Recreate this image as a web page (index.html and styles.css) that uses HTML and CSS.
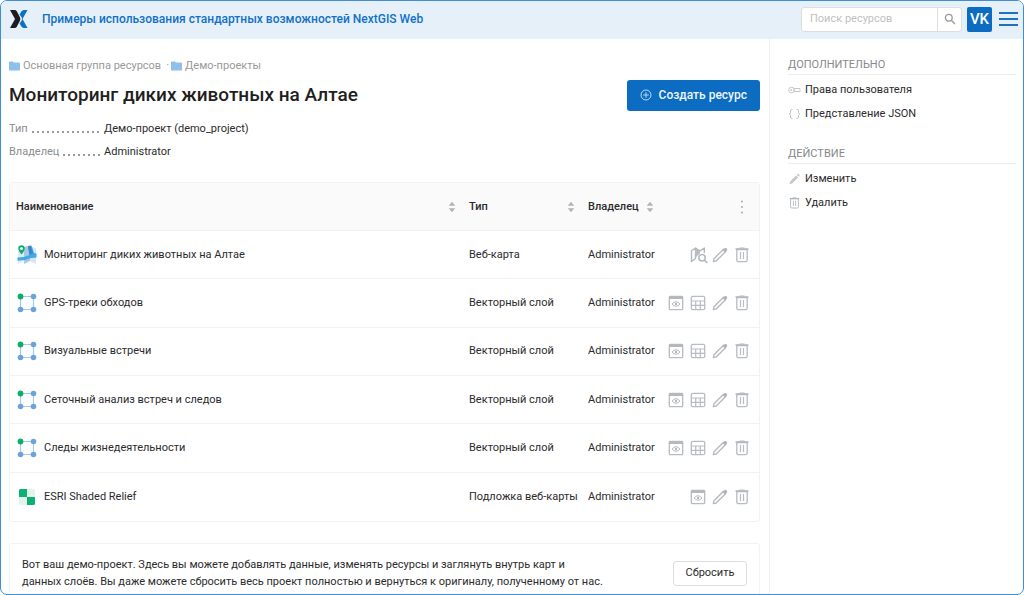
FILE: index.html
```html
<!DOCTYPE html>
<html lang="ru">
<head>
<meta charset="utf-8">
<title>Мониторинг диких животных на Алтае</title>
<link rel="stylesheet" href="styles.css">
</head>
<body>
<svg class="sprite" aria-hidden="true">
  <symbol id="folder" viewBox="0 0 12 10"><path d="M0 1q0-1 1-1h3.300l1 1.300H11q1 0 1 1V9q0 1-1 1H1q-1 0-1-1z" fill="#8dc1eb"/></symbol>
  <symbol id="sort" viewBox="0 0 8 12"><path d="M4 .8 7.300 4.800H.7zM4 11.200.7 7.200h6.600z" fill="#b2b4b6"/></symbol>
  <symbol id="vector" viewBox="0 0 20 20"><path d="M3.500 3.500h13v13h-13z" fill="none" stroke="#a5c9ea" stroke-width="1.200"/><circle cx="3.500" cy="3.500" r="2.900" fill="#0caf69"/><circle cx="16.500" cy="3.500" r="2.800" fill="#6ca3da"/><circle cx="3.500" cy="16.500" r="2.800" fill="#6ca3da"/><circle cx="16.500" cy="16.500" r="2.800" fill="#6ca3da"/></symbol>
  <symbol id="webmap" viewBox="0 0 20 20"><path d="M1 5 7 2v14l-6 3z" fill="#d9eaf8"/><path d="M7 2l6-1.500V16l-6 3z" fill="#a9c8e5"/><path d="M13 1l6 2.500V19l-6-3z" fill="#d5e6f5"/><path d="M.5 12.500 7 12l5.500-2L11 1.500 14.500.5 17 8l2.500.5v4L14 13l-6 2-7.500.8z" fill="#43a7e8"/><path d="M12.500 10 11 1.500 13.500.5 16 8z" fill="#3c86ca"/><path d="M4.500 9.500C2.500 6.800 1.300 5.300 1.300 3.500a3.200 3.200 0 0 1 6.400 0c0 1.800-1.200 3.300-3.200 6z" fill="#0cae6a"/><circle cx="4.500" cy="3.500" r="1.500" fill="#e9fff4"/></symbol>
  <symbol id="basemap" viewBox="0 0 20 20"><rect x="2" y="2" width="16" height="16" rx="1.500" fill="#e3f4ed"/><path d="M3.500 2H10v8H2V3.500Q2 2 3.500 2zM10 10h8v6.500q0 1.500-1.500 1.500H10z" fill="#0bb173"/></symbol>
  <symbol id="preview" viewBox="0 0 16 16"><rect x="1.300" y="1.300" width="13.400" height="13.400" rx="1" fill="none" stroke="#b7bcc2" stroke-width="1.300"/><path d="M1 1h14v3H1z" fill="#b3b9bf"/><path d="M4 9q4-4.600 8 0-4 4.600-8 0z" fill="none" stroke="#b7bcc2"/><circle cx="8" cy="9" r="1.200" fill="#b3b9bf"/></symbol>
  <symbol id="grid" viewBox="0 0 16 16"><rect x="1.300" y="1.300" width="13.400" height="13.400" rx="1.500" fill="none" stroke="#b7bcc2" stroke-width="1.300"/><path d="M1 6h14M1 10.300h14M5.700 6v9M10.300 6v9" stroke="#b7bcc2" stroke-width="1.200"/></symbol>
  <symbol id="pencil" viewBox="0 0 16 16"><path d="m1.300 14.700.6-3 9.600-9.500 2.300 2.300-9.600 9.500z" fill="none" stroke="#b5bac0" stroke-width="1.300" stroke-linejoin="round"/><path d="m10.500 3 2.300-2q.7-.5 1.300 0l.9.900q.5.600 0 1.300l-2 2.300z" fill="#aeb4ba"/></symbol>
  <symbol id="trash" viewBox="0 0 16 16"><path d="M2.800 2.500h10.400V13q0 1.700-1.700 1.700h-7q-1.700 0-1.700-1.700z" fill="none" stroke="#b7bcc2" stroke-width="1.300"/><path d="M1.500 2h13" stroke="#b0b6bc" stroke-width="1.500"/><path d="M5.500 1h5M6.500 5v7M9.500 5v7" stroke="#b7bcc2" stroke-width="1.200"/></symbol>
  <symbol id="mapview" viewBox="0 0 18 18"><path d="M5.500 2v10.500l-4 3V4.800zL10 4.800 14.300 2v5" fill="none" stroke="#b3b9bf" stroke-width="1.400" stroke-linejoin="round"/><path d="M5.500 2 10 4.800v2.500L7 10l-1.500 2.500z" fill="#b8bdc3"/><circle cx="12" cy="11.800" r="3.200" fill="#fff" stroke="#b3b9bf" stroke-width="1.500"/><path d="m14.300 14 3 3" stroke="#b3b9bf" stroke-width="1.700"/></symbol>
</svg>

<div class="frame">
  <header class="topbar">
    <a class="logo" href="#" aria-label="NextGIS"><svg width="18" height="18" viewBox="0 0 18 18"><path d="M0 0h4.500q1.500 0 2.300 1.300L9.800 7q1.200 2 0 4l-3 5.700Q6 18 4.500 18H0l5-9z" fill="#1d1d1f"/><path d="M17.500 0H14q-1.800 0-2.800 1.800L9.600 4.600l2.100 3q.8 1.400 0 2.800l-2.100 3 1.600 2.800q1 1.800 2.800 1.800h3.500l-5-9z" fill="#0b70c9"/></svg></a>
    <a class="portal" href="#">Примеры использования стандартных возможностей NextGIS Web</a>
    <form class="search">
      <input type="search" placeholder="Поиск ресурсов" aria-label="Поиск ресурсов">
      <button type="button" aria-label="Найти"><svg width="12" height="12" viewBox="0 0 12 12" fill="none" stroke="#999" stroke-width="1.300"><circle cx="4.800" cy="4.800" r="3.400"/><path d="m7.300 7.300 3.700 3.700"/></svg></button>
    </form>
    <button class="avatar" type="button">VK</button>
    <button class="menu" type="button" aria-label="Меню"><span></span><span></span><span></span></button>
  </header>

  <div class="body">
    <main class="main">
      <nav class="crumbs">
        <a href="#"><svg width="11" height="10"><use href="#folder"/></svg>Основная группа ресурсов</a>
        <span class="dot">·</span>
        <a href="#"><svg width="11" height="10"><use href="#folder"/></svg>Демо-проекты</a>
      </nav>
      <div class="heading">
        <h1>Мониторинг диких животных на Алтае</h1>
        <button class="create" type="button"><svg width="12" height="12" viewBox="0 0 12 12" fill="none" stroke="#b9daf5"><circle cx="6" cy="6" r="5"/><path d="M6 3.200v5.600M3.200 6h5.600"/></svg>Создать ресурс</button>
      </div>
      <dl class="facts">
        <div><dt>Тип</dt><dd>Демо-проект (demo_project)</dd></div>
        <div><dt>Владелец</dt><dd>Administrator</dd></div>
      </dl>

      <table class="resources">
        <colgroup><col><col class="c-type"><col class="c-owner"><col class="c-actions"></colgroup>
        <thead>
          <tr>
            <th><div class="cell">Наименование<svg class="push" width="8" height="12"><use href="#sort"/></svg></div></th>
            <th><div class="cell">Тип<svg class="push" width="8" height="12"><use href="#sort"/></svg></div></th>
            <th><div class="cell">Владелец<svg class="push" width="8" height="12"><use href="#sort"/></svg></div></th>
            <th><div class="actions"><button type="button" aria-label="Ещё"><svg width="16" height="16" viewBox="0 0 16 16" fill="#aaa"><circle cx="8" cy="2.500" r="1"/><circle cx="8" cy="8" r="1"/><circle cx="8" cy="13.500" r="1"/></svg></button></div></th>
          </tr>
        </thead>
        <tbody>
          <tr><td><a class="cell" href="#"><svg width="20" height="20"><use href="#webmap"/></svg>Мониторинг диких животных на Алтае</a></td><td>Веб-карта</td><td>Administrator</td><td><div class="actions"><button type="button" aria-label="Открыть карту"><svg width="18" height="18"><use href="#mapview"/></svg></button><button type="button" aria-label="Изменить"><svg width="16" height="16"><use href="#pencil"/></svg></button><button type="button" aria-label="Удалить"><svg width="16" height="16"><use href="#trash"/></svg></button></div></td></tr>
          <tr><td><a class="cell" href="#"><svg width="20" height="20"><use href="#vector"/></svg>GPS-треки обходов</a></td><td>Векторный слой</td><td>Administrator</td><td><div class="actions"><button type="button" aria-label="Просмотр"><svg width="16" height="16"><use href="#preview"/></svg></button><button type="button" aria-label="Таблица"><svg width="16" height="16"><use href="#grid"/></svg></button><button type="button" aria-label="Изменить"><svg width="16" height="16"><use href="#pencil"/></svg></button><button type="button" aria-label="Удалить"><svg width="16" height="16"><use href="#trash"/></svg></button></div></td></tr>
          <tr><td><a class="cell" href="#"><svg width="20" height="20"><use href="#vector"/></svg>Визуальные встречи</a></td><td>Векторный слой</td><td>Administrator</td><td><div class="actions"><button type="button" aria-label="Просмотр"><svg width="16" height="16"><use href="#preview"/></svg></button><button type="button" aria-label="Таблица"><svg width="16" height="16"><use href="#grid"/></svg></button><button type="button" aria-label="Изменить"><svg width="16" height="16"><use href="#pencil"/></svg></button><button type="button" aria-label="Удалить"><svg width="16" height="16"><use href="#trash"/></svg></button></div></td></tr>
          <tr><td><a class="cell" href="#"><svg width="20" height="20"><use href="#vector"/></svg>Сеточный анализ встреч и следов</a></td><td>Векторный слой</td><td>Administrator</td><td><div class="actions"><button type="button" aria-label="Просмотр"><svg width="16" height="16"><use href="#preview"/></svg></button><button type="button" aria-label="Таблица"><svg width="16" height="16"><use href="#grid"/></svg></button><button type="button" aria-label="Изменить"><svg width="16" height="16"><use href="#pencil"/></svg></button><button type="button" aria-label="Удалить"><svg width="16" height="16"><use href="#trash"/></svg></button></div></td></tr>
          <tr><td><a class="cell" href="#"><svg width="20" height="20"><use href="#vector"/></svg>Следы жизнедеятельности</a></td><td>Векторный слой</td><td>Administrator</td><td><div class="actions"><button type="button" aria-label="Просмотр"><svg width="16" height="16"><use href="#preview"/></svg></button><button type="button" aria-label="Таблица"><svg width="16" height="16"><use href="#grid"/></svg></button><button type="button" aria-label="Изменить"><svg width="16" height="16"><use href="#pencil"/></svg></button><button type="button" aria-label="Удалить"><svg width="16" height="16"><use href="#trash"/></svg></button></div></td></tr>
          <tr><td><a class="cell" href="#"><svg width="20" height="20"><use href="#basemap"/></svg>ESRI Shaded Relief</a></td><td>Подложка веб-карты</td><td>Administrator</td><td><div class="actions"><button type="button" aria-label="Просмотр"><svg width="16" height="16"><use href="#preview"/></svg></button><button type="button" aria-label="Изменить"><svg width="16" height="16"><use href="#pencil"/></svg></button><button type="button" aria-label="Удалить"><svg width="16" height="16"><use href="#trash"/></svg></button></div></td></tr>
        </tbody>
      </table>

      <section class="note">
        <p>Вот ваш демо-проект. Здесь вы можете добавлять данные, изменять ресурсы и заглянуть внутрь карт и<br>данных слоёв. Вы даже можете сбросить весь проект полностью и вернуться к оригиналу, полученному от нас.</p>
        <button type="button">Сбросить</button>
      </section>
    </main>

    <aside class="side">
      <h2>Дополнительно</h2>
      <ul>
        <li><a href="#"><svg width="13" height="12" viewBox="0 0 13 12" fill="none" stroke="#c3c7cb"><circle cx="3.500" cy="6" r="2.800"/><circle cx="3.200" cy="6" r=".6"/><path d="M6 4.500h6v3H6z"/></svg>Права пользователя</a></li>
        <li><a href="#"><svg width="13" height="12" viewBox="0 0 13 12" fill="none" stroke="#b9bec3"><path d="M4.500 1.500H3.800Q2.500 1.500 2.500 3v1.500L1.500 6l1 1.500V9q0 1.500 1.300 1.500h.7M8.500 1.500h.7q1.300 0 1.300 1.500v1.500l1 1.500-1 1.500V9q0 1.500-1.300 1.500h-.7"/></svg>Представление JSON</a></li>
      </ul>
      <h2>Действие</h2>
      <ul>
        <li><a href="#"><svg width="13" height="12" viewBox="0 0 13 12"><path d="m1.500 11 .6-2.600 6-6 2 2-6 6zM8.700 1.800l.8-.8q.6-.4 1 0l1 1q.4.500 0 1l-.8.800z" fill="#c3c7cb"/></svg>Изменить</a></li>
        <li><a href="#"><svg width="13" height="12"><use href="#trash"/></svg>Удалить</a></li>
      </ul>
    </aside>
  </div>
</div>
</body>
</html>
```

FILE: styles.css
```css
* { box-sizing: border-box; }
body { margin: 0; background: #fff; color: #2b2b2d; font: 11px/20px Roboto, "Noto Sans", sans-serif; }
a { color: inherit; text-decoration: none; }
button { font: inherit; color: inherit; padding: 0; border: 0; background: none; cursor: pointer; }
svg { flex: none; display: block; }
h1, h2, p, ul, dl, dd { margin: 0; padding: 0; }
.sprite { position: absolute; width: 0; height: 0; }

.frame { display: flex; flex-direction: column; height: 100vh; overflow: hidden; border: 1px solid #3f8ed3; border-radius: 7px; }

.topbar { display: flex; align-items: center; flex: none; height: 38px; padding: 0 5px 2px 9px; background: #e6f0f9; }
.logo { margin-right: 14px; }
.portal { margin-right: auto; color: #1271c6; font-size: 12px; font-weight: 500; }
.search { display: flex; width: 161px; height: 25px; margin-right: 5px; background: #fff; border: 1px solid #dcdfe2; border-radius: 3px; }
.search input { flex: 1; min-width: 0; padding: 0 8px; border: 0; background: none; font: inherit; outline: 0; }
.search input::placeholder { color: #bfbfbf; }
.search button { display: grid; place-items: center; width: 24px; border-left: 1px solid #dcdfe2; }
.avatar { width: 25px; height: 25px; margin-right: 7px; background: #0b6cc1; border-radius: 2px; color: #fff; font-size: 15px; font-weight: 500; }
.menu { display: grid; gap: 4px; width: 19px; }
.menu span { height: 2px; background: #1b72c0; }

.body { display: flex; flex: 1; min-height: 0; }
.main { flex: 1; min-width: 0; padding: 17px 9px 0 8px; }
.side { width: 254px; padding: 17px 7px 0 18px; border-left: 1px solid #f0f0f0; }

.crumbs { display: flex; color: #999; }
.crumbs a { display: flex; align-items: center; gap: 3px; }
.crumbs .dot { margin: 0 2px 0 5px; }

.heading { display: flex; align-items: center; justify-content: space-between; margin-top: 3px; }
h1 { font-size: 19px; line-height: 32px; font-weight: 500; color: #1f1f21; }
.create { display: flex; align-items: center; gap: 7px; height: 31px; padding: 0 13px; background: #0b6cc1; border-radius: 3px; color: #eef6fd; font-size: 12px; font-weight: 500; }

.facts { display: grid; gap: 3px; margin-top: 8px; }
.facts div { display: flex; }
.facts dt { display: flex; width: 91px; margin-right: 4px; color: #8a8d90; }
.facts dt::after { content: ""; flex: 1; height: 2px; margin: 12px 0 0 4px; background: radial-gradient(circle at 1px 1px, #999 1px, transparent 1px) 0 0 / 5px 2px; }

.resources { width: 100%; height: 340px; margin-top: 20px; table-layout: fixed; border: 1px solid #f2f2f2; border-spacing: 0; border-radius: 3px; }
.c-type { width: 119px; }
.c-owner { width: 75px; }
.c-actions { width: 103px; }
.resources th, .resources td { height: 48px; padding: 0 0 0 7px; text-align: left; white-space: nowrap; border-bottom: 1px solid #f2f2f2; }
.resources th { background: #fafafa; font-weight: 500; }
.resources tr:last-child td { border-bottom: 0; }
.resources th:nth-child(-n+3) { padding-right: 6px; }
.resources th:first-child { padding-left: 6px; }
.cell { display: flex; align-items: center; gap: 7px; }
.push { margin-left: auto; }
.actions { display: flex; justify-content: flex-end; gap: 6px; padding-right: 9px; }
.actions button { display: grid; place-items: center; width: 16px; height: 20px; }

.note { display: flex; align-items: center; justify-content: space-between; margin-top: 21px; padding: 12px; border: 1px solid #f2f2f2; border-radius: 3px; }
.note p { line-height: 17px; }
.note button { width: 74px; height: 25px; border: 1px solid #dedede; border-radius: 3px; }

.side h2 { border-bottom: 1px solid #ececec; color: #85898c; font-size: 11px; line-height: 18px; font-weight: 400; text-transform: uppercase; }
.side ul { display: grid; gap: 4px; margin: 5px 0 21px; list-style: none; }
.side li a { display: flex; align-items: center; gap: 4px; }
```
